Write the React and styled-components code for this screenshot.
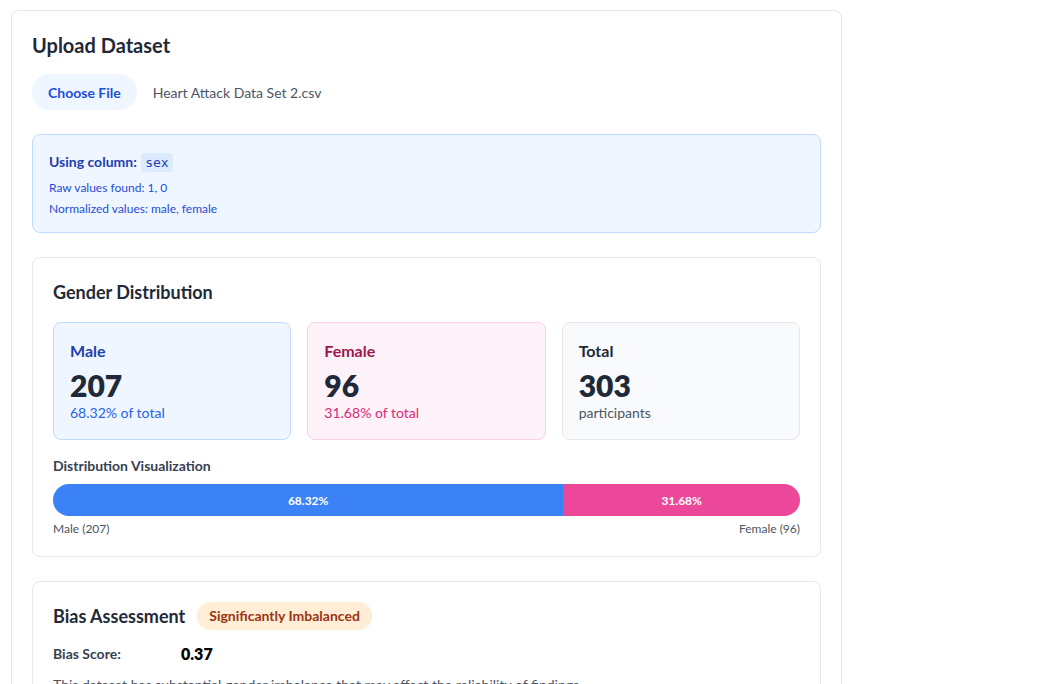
import React from "react";
import styled, { createGlobalStyle } from "styled-components";

const GlobalStyle = createGlobalStyle`
  html, body {
    margin: 0;
    padding: 0;
    background: #ffffff;
    overflow: hidden;
  }
  body {
    font-family: "Segoe UI", Lato, "Noto Sans", sans-serif;
    color: #1f2937;
  }
  * { box-sizing: border-box; }
`;

const stats = { male: 207, female: 96, total: 303 };

export default function App() {
  const malePct = ((stats.male / stats.total) * 100).toFixed(2);
  const femalePct = ((stats.female / stats.total) * 100).toFixed(2);

  return (
    <Page>
      <GlobalStyle />
      <Panel>
        <Title>Upload Dataset</Title>
        <UploadRow>
          <ChooseButton>Choose File</ChooseButton>
          <FileName>Heart Attack Data Set 2.csv</FileName>
        </UploadRow>

        <InfoBox>
          <InfoTitle>
            Using column: <Code>sex</Code>
          </InfoTitle>
          <InfoLine>Raw values found: 1, 0</InfoLine>
          <InfoLine>Normalized values: male, female</InfoLine>
        </InfoBox>

        <Section tight>
          <SectionTitle>Gender Distribution</SectionTitle>
          <StatGrid>
            <StatCard tone="male">
              <StatLabel tone="male">Male</StatLabel>
              <StatValue>{stats.male}</StatValue>
              <StatSub tone="male">{malePct}% of total</StatSub>
            </StatCard>
            <StatCard tone="female">
              <StatLabel tone="female">Female</StatLabel>
              <StatValue>{stats.female}</StatValue>
              <StatSub tone="female">{femalePct}% of total</StatSub>
            </StatCard>
            <StatCard tone="total">
              <StatLabel tone="total">Total</StatLabel>
              <StatValue>{stats.total}</StatValue>
              <StatSub tone="total">participants</StatSub>
            </StatCard>
          </StatGrid>

          <VizTitle>Distribution Visualization</VizTitle>
          <Bar>
            <BarPart tone="male" style={{ width: `${malePct}%` }}>{malePct}%</BarPart>
            <BarPart tone="female" style={{ width: `${femalePct}%` }}>{femalePct}%</BarPart>
          </Bar>
          <BarLegend>
            <span>Male ({stats.male})</span>
            <span>Female ({stats.female})</span>
          </BarLegend>
        </Section>

        <Section>
          <HeadRow>
            <SectionTitle as="h3">Bias Assessment</SectionTitle>
            <Badge>Significantly Imbalanced</Badge>
          </HeadRow>
          <ScoreRow>
            <ScoreLabel>Bias Score:</ScoreLabel>
            <ScoreValue>0.37</ScoreValue>
          </ScoreRow>
          <Note>
            This dataset has substantial gender imbalance that may affect the reliability of findings.
          </Note>
        </Section>
      </Panel>
    </Page>
  );
}

const tones = {
  male: { bg: "#eff6ff", border: "#bfdbfe", label: "#1e40af", sub: "#2563eb", bar: "#3b82f6" },
  female: { bg: "#fdf2f8", border: "#fbcfe8", label: "#9d174d", sub: "#db2777", bar: "#ec4899" },
  total: { bg: "#f9fafb", border: "#e5e7eb", label: "#1f2937", sub: "#4b5563", bar: "#9ca3af" },
};

const Page = styled.div`
  padding: 10px 11px;
  width: 853px;
`;

const Panel = styled.div`
  background: #fff;
  border: 1px solid #e5e7eb;
  border-radius: 8px;
  padding: 20px;
  box-shadow: 0 1px 2px rgba(0, 0, 0, 0.04);
`;

const Title = styled.h2`
  margin: 0 0 15px;
  font-size: 20px;
  line-height: 28px;
  font-weight: 700;
  color: #1f2937;
`;

const UploadRow = styled.div`
  display: flex;
  align-items: center;
  gap: 16px;
  margin-bottom: 24px;
`;

const ChooseButton = styled.button`
  border: none;
  background: #eff6ff;
  color: #1d4ed8;
  font-family: inherit;
  font-size: 14px;
  font-weight: 700;
  height: 36px;
  padding: 0 16px;
  border-radius: 999px;
  cursor: pointer;
`;

const FileName = styled.span`
  font-size: 14px;
  color: #4b5563;
`;

const InfoBox = styled.div`
  background: #eff6ff;
  border: 1px solid #bfdbfe;
  border-radius: 8px;
  padding: 15px 16px 13px;
  margin-bottom: 24px;
`;

const InfoTitle = styled.div`
  font-size: 14px;
  line-height: 24px;
  font-weight: 700;
  color: #1e40af;
  margin-bottom: 2px;
`;

const Code = styled.code`
  font-family: "DejaVu Sans Mono", "Liberation Mono", monospace;
  font-weight: 400;
  font-size: 13px;
  background: #dbeafe;
  padding: 2px 4px;
  border-radius: 4px;
  margin-left: 1px;
`;

const InfoLine = styled.div`
  font-size: 12px;
  line-height: 21px;
  color: #1d4ed8;
`;

const Section = styled.div`
  border: 1px solid #e5e7eb;
  border-radius: 8px;
  padding: 20px 20px ${(p) => (p.tight ? "18px" : "20px")};
  margin-bottom: 24px;
`;

const SectionTitle = styled.h3`
  margin: 0 0 16px;
  font-size: 18px;
  line-height: 28px;
  font-weight: 700;
  color: #1f2937;
`;

const StatGrid = styled.div`
  display: grid;
  grid-template-columns: repeat(3, 1fr);
  gap: 16px;
  margin-bottom: 16px;
`;

const StatCard = styled.div`
  background: ${(p) => tones[p.tone].bg};
  border: 1px solid ${(p) => tones[p.tone].border};
  border-radius: 8px;
  padding: 16px;
`;

const StatLabel = styled.div`
  font-size: 16px;
  line-height: 24px;
  font-weight: 700;
  color: ${(p) => tones[p.tone].label};
`;

const StatValue = styled.div`
  margin-top: 4px;
  font-size: 30px;
  line-height: 36px;
  font-weight: 800;
  color: #1f2937;
`;

const StatSub = styled.div`
  font-size: 14px;
  line-height: 20px;
  color: ${(p) => tones[p.tone].sub};
`;

const VizTitle = styled.div`
  font-size: 14px;
  line-height: 20px;
  font-weight: 700;
  color: #374151;
  margin-bottom: 8px;
`;

const Bar = styled.div`
  display: flex;
  height: 32px;
  border-radius: 999px;
  overflow: hidden;
`;

const BarPart = styled.div`
  display: flex;
  align-items: center;
  justify-content: center;
  background: ${(p) => tones[p.tone].bar};
  color: #fff;
  font-size: 12px;
  font-weight: 700;
`;

const BarLegend = styled.div`
  display: flex;
  justify-content: space-between;
  margin-top: 4px;
  font-size: 12px;
  line-height: 18px;
  color: #4b5563;
`;

const HeadRow = styled.div`
  display: flex;
  align-items: center;
  gap: 12px;
  margin-bottom: 14px;

  h3 {
    margin: 0;
  }
`;

const Badge = styled.span`
  background: #ffedd5;
  color: #9a3412;
  font-size: 14px;
  font-weight: 700;
  line-height: 20px;
  padding: 4px 12px;
  border-radius: 999px;
`;

const ScoreRow = styled.div`
  display: flex;
  align-items: center;
  margin-bottom: 12px;
`;

const ScoreLabel = styled.span`
  width: 128px;
  font-size: 14px;
  font-weight: 700;
  color: #374151;
`;

const ScoreValue = styled.span`
  font-size: 16px;
  font-weight: 800;
  color: #000;
`;

const Note = styled.p`
  margin: 0;
  font-size: 14px;
  line-height: 20px;
  color: #4b5563;
`;
